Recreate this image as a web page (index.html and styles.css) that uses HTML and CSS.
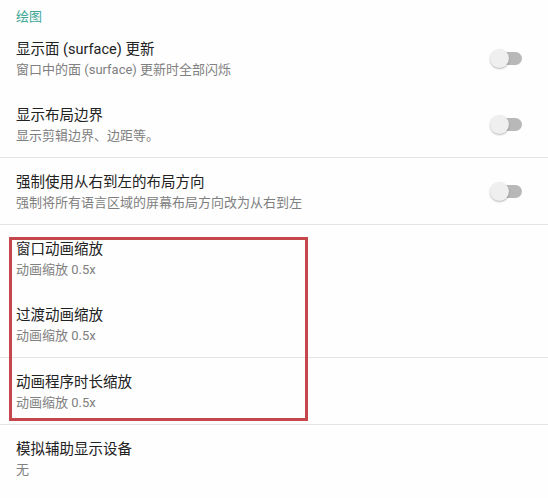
FILE: index.html
```html
<!DOCTYPE html>
<html lang="zh-CN">
<head>
<meta charset="utf-8">
<link rel="stylesheet" href="styles.css">
</head>
<body>
<div class="page">
  <div class="header">绘图</div>

  <div class="row">
    <div class="text">
      <div class="title">显示面 (surface) 更新</div>
      <div class="sub">窗口中的面 (surface) 更新时全部闪烁</div>
    </div>
    <div class="switch"><span class="thumb"></span></div>
  </div>

  <div class="row divided">
    <div class="text">
      <div class="title">显示布局边界</div>
      <div class="sub">显示剪辑边界、边距等。</div>
    </div>
    <div class="switch"><span class="thumb"></span></div>
  </div>

  <div class="row divided">
    <div class="text">
      <div class="title">强制使用从右到左的布局方向</div>
      <div class="sub">强制将所有语言区域的屏幕布局方向改为从右到左</div>
    </div>
    <div class="switch"><span class="thumb"></span></div>
  </div>

  <div class="group">
    <div class="row">
      <div class="text">
        <div class="title">窗口动画缩放</div>
        <div class="sub">动画缩放 0.5x</div>
      </div>
    </div>

    <div class="row divided">
      <div class="text">
        <div class="title">过渡动画缩放</div>
        <div class="sub">动画缩放 0.5x</div>
      </div>
    </div>

    <div class="row divided">
      <div class="text">
        <div class="title">动画程序时长缩放</div>
        <div class="sub">动画缩放 0.5x</div>
      </div>
    </div>
    <div class="highlight"></div>
  </div>

  <div class="row">
    <div class="text">
      <div class="title">模拟辅助显示设备</div>
      <div class="sub">无</div>
    </div>
  </div>
</div>
</body>
</html>
```

FILE: styles.css
```css
html, body {
  margin: 0;
  padding: 0;
  background: #fefefe;
}

body {
  font-family: Roboto, "Noto Sans CJK SC", sans-serif;
  width: 548px;
  height: 498px;
  overflow: hidden;
}

.page {
  display: flex;
  flex-direction: column;
}

.header {
  height: 24.67px;
  box-sizing: border-box;
  padding: 7px 0 0 16px;
  font-size: 13px;
  line-height: 20px;
  color: #3ea797;
}

.row {
  height: 66.67px;
  box-sizing: border-box;
  display: flex;
  align-items: center;
  padding: 0 26px 0 16px;
}

.row.divided {
  border-bottom: 1px solid #e4e4e4;
}

.text {
  flex: 1;
  align-self: flex-start;
  padding-top: 15px;
}

.title {
  font-size: 14.5px;
  line-height: 20px;
  color: #222222;
}

.sub {
  font-size: 13px;
  line-height: 20px;
  color: #808080;
}

.switch {
  position: relative;
  width: 30px;
  height: 13px;
  border-radius: 7px;
  background: #b8b8b8;
  margin-top: 1px;
}

.thumb {
  position: absolute;
  left: -2px;
  top: -3px;
  width: 19px;
  height: 19px;
  border-radius: 50%;
  background: #efefef;
  box-shadow: 0 1px 2px rgba(0, 0, 0, 0.28);
}

.group {
  position: relative;
  display: flex;
  flex-direction: column;
}

.highlight {
  position: absolute;
  left: 9px;
  top: 12px;
  width: 299px;
  height: 184px;
  box-sizing: border-box;
  border: 3px solid #c4484b;
}
```
